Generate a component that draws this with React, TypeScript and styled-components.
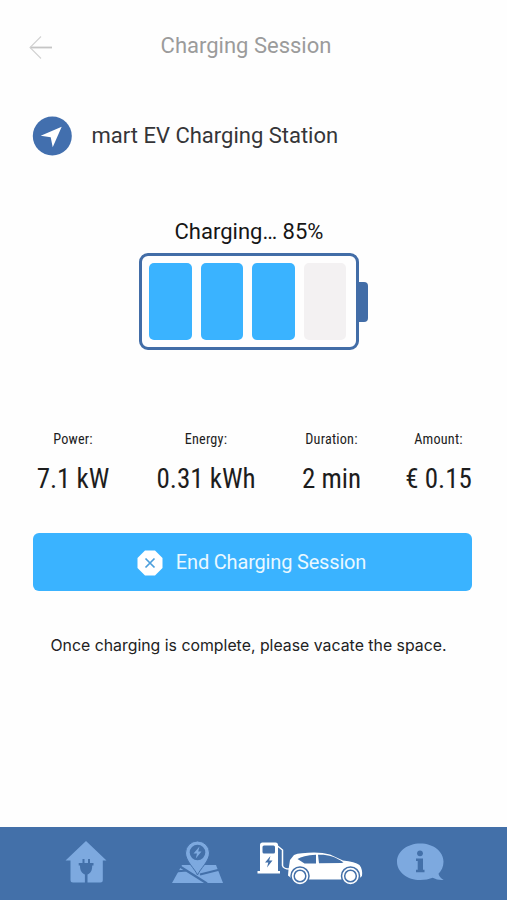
import React from 'react';
import styled, { createGlobalStyle } from 'styled-components';

const GlobalStyle = createGlobalStyle`
  * { box-sizing: border-box; }
  html, body { margin: 0; background: #fefefe; }
  body { font-family: Roboto, "Liberation Sans", sans-serif; }
  svg { display: block; flex: none; }
`;

const Screen = styled.div`
  width: 507px;
  height: 900px;
  display: flex;
  flex-direction: column;
  background: #fefefe;
  overflow: hidden;
`;

const Header = styled.header`
  height: 90px;
  display: grid;
  grid-template-columns: 109px 274px 1fr;
  align-items: center;
`;

const BackButton = styled.button`
  border: 0;
  background: none;
  padding: 4px 0 0 28px;
`;

const Title = styled.h1`
  margin: 0;
  padding-top: 2px;
  text-align: center;
  font-size: 22px;
  line-height: 28px;
  font-weight: 400;
  color: #9b9b9b;
`;

const Station = styled.div`
  height: 92px;
  display: flex;
  align-items: center;
  gap: 19.5px;
  padding-left: 32px;
`;

const StationName = styled.span`
  font-size: 22px;
  line-height: 28px;
  color: #353538;
`;

const Charge = styled.section`
  height: 239px;
  padding: 36px 0 0 139px;
`;

const ChargeLabel = styled.div`
  width: 220px;
  height: 35px;
  text-align: center;
  font-size: 22px;
  line-height: 28px;
  color: #161616;
`;

const Battery = styled.div`
  display: flex;
  align-items: center;
`;

const Shell = styled.div`
  width: 220px;
  height: 97px;
  padding: 7px;
  display: flex;
  gap: 9px;
  border: 3px solid #426da7;
  border-radius: 9px;
`;

const Cell = styled.div<{ $full: boolean }>`
  width: 42.5px;
  height: 77px;
  border-radius: 5px;
  background: ${(p) => (p.$full ? '#3ab3ff' : '#f3f1f2')};
`;

const Terminal = styled.div`
  width: 9px;
  height: 40px;
  border-radius: 0 4px 4px 0;
  background: #426da7;
`;

const Stats = styled.dl`
  margin: 0;
  height: 112px;
  padding: 8px 11px 0 7px;
  display: grid;
  grid-template-columns: 132px 134px 117px 97px;
`;

const Stat = styled.div`
  display: flex;
  flex-direction: column;
  align-items: center;
  white-space: nowrap;
  color: #1d1d1d;
  font-family: "Roboto Condensed", Roboto, sans-serif;
  font-stretch: 75%;
`;

const StatName = styled.dt`
  font-size: 14.2px;
  line-height: 20px;
  letter-spacing: 0.2px;
`;

const StatValue = styled.dd`
  margin: 14px 0 0;
  font-size: 27px;
  line-height: 32px;
`;

const EndButton = styled.button`
  margin-left: 33px;
  width: 439px;
  height: 58px;
  padding: 0 2px 0 0;
  display: flex;
  align-items: center;
  justify-content: center;
  gap: 13px;
  border: 0;
  border-radius: 6px;
  background: #3ab3ff;
  color: #e9f8ff;
  font: 400 20px/28px Roboto, sans-serif;
  letter-spacing: -0.18px;
`;

const EndIcon = styled.svg`
  margin-top: 1px;
`;

const Note = styled.p`
  margin: 43px 0 0;
  width: 497px;
  text-align: center;
  font: 400 15.85px/24px Inter, sans-serif;
  color: #222;
`;

const Nav = styled.nav`
  margin-top: auto;
  height: 73px;
  padding: 9px 0 0 59px;
  display: grid;
  grid-template-columns: 107px 88px 139px 1fr;
  background: #4370a9;
`;

const NavItem = styled.a<{ $active?: boolean }>`
  color: ${(p) => (p.$active ? '#fff' : '#7da9df')};
`;

const BG = '#4370a9';

const HouseIcon = () => (
  <svg width="54" height="54" viewBox="59 836 54 54" fill="currentColor">
    <path d="M86 841 106.5 860.5H102.8V880q0 2.5-2.5 2.5H73q-2.500 0-2.500-2.500V860.500H65.500Z" />
    <path fill={BG} d="M82.500 859h2v4h3.500v-4h2v4h3.500v2.500h-1.300c0 5.500-1.700 7.800-4.700 9v8.500h-2.600V874.500c-3-1.200-4.900-3.500-4.900-9h-1.300V863h3.800Z" />
  </svg>
);

const MapIcon = () => (
  <svg width="62" height="54" viewBox="166 836 62 54" fill="currentColor">
    <path d="M182 865h34l7 18H172Z" />
    <path d="M175 871.500 187 870.500 M180 866.500 207 883.500" fill="none" stroke={BG} strokeWidth="2.200" />
    <path d="M200 874.500 220 869.500" fill="none" stroke={BG} strokeWidth="2" />
    <path stroke={BG} strokeWidth="1" d="M197.500 875c-2.500-6-12-14-12-22a12 12 0 0 1 24 0c0 8-9.500 16-12 22Z" />
    <circle cx="197.500" cy="852.500" r="7.800" fill={BG} />
    <path d="m199.500 846.500-6 7h3.500l-1.200 5 5.700-7H198.200Z" />
  </svg>
);

const CarIcon = () => (
  <svg width="112" height="54" viewBox="254 836 112 54" fill="currentColor">
    <path d="M260 871V845q0-2.500 2.500-2.500h13q2.500 0 2.500 2.500V871h2v2.500H257.500V871Z" />
    <rect x="262.500" y="845.500" width="12.500" height="8" rx="1.500" fill={BG} />
    <path fill={BG} d="m270.500 856-5.500 6.500h3.300l-1.300 5 5.500-7h-3.300Z" />
    <path d="M277 845.500 282.500 850V865.500Q283 869 290 869" fill="none" stroke="currentColor" strokeWidth="1.500" />
    <path d="M288.500 869.500 290 860l4-5q3-1.500 8-1.800 17-2 28 1.300l13 6q12 1 16.500 4.500c2.500 3 3 7 2.500 11l-4 3.500H293l-5-4Z" />
    <path fill={BG} d="M297.500 859q5-3.500 18.500-4.200v8.700h-11.500ZM318 854.800c9-.5 17 1.500 25.500 7.700l-2 .5-22.500.2Z" />
    <g fill="currentColor" stroke={BG} strokeWidth="1.500">
      <circle cx="300" cy="876" r="9" /><circle cx="350.500" cy="876" r="9" />
      <circle cx="300" cy="876" r="5.800" /><circle cx="350.500" cy="876" r="5.800" />
    </g>
  </svg>
);

const InfoIcon = () => (
  <svg width="54" height="54" viewBox="393 836 54 54" fill="currentColor">
    <path d="M420.300 843.500c13 0 23.200 8 23.200 18.200 0 5-2 9-5 12q1 4 5.200 6.300-6 .6-11-2.300-5.500 2.300-12.400 2.300c-13 0-23.300-8-23.300-18.300s10.300-18.200 23.300-18.200Z" />
    <g fill={BG}>
      <circle cx="420" cy="853.300" r="2.900" />
      <path d="M416 858.500h7V869.700h1.500v2.500H416V869.700h1.700v-8.700h-1.700Z" />
    </g>
  </svg>
);

const stats = [
  ['Power:', '7.1 kW'],
  ['Energy:', '0.31 kWh'],
  ['Duration:', '2 min'],
  ['Amount:', '€ 0.15'],
];

export default function App() {
  return (
    <Screen>
      <GlobalStyle />
      <Header>
        <BackButton aria-label="Back">
          <svg width="26" height="24" viewBox="0 0 26 24" fill="none" stroke="#c5c5c5" strokeWidth="1.800">
            <path d="M24 12.500H2" />
            <path d="M13 1.500 2 12.500l11 11" stroke="#d2d2d2" strokeWidth="1.100" />
          </svg>
        </BackButton>
        <Title>Charging Session</Title>
      </Header>
      <Station>
        <svg width="40" height="40" viewBox="0 0 40 40">
          <circle cx="20.300" cy="20" r="19.500" fill="#426fae" />
          <path d="M29.700 10.700 20.700 31.300 18.700 21.300 8.700 19.700Z" fill="#fff" />
        </svg>
        <StationName>mart EV Charging Station</StationName>
      </Station>
      <Charge>
        <ChargeLabel>Charging… 85%</ChargeLabel>
        <Battery>
          <Shell>
            {[true, true, true, false].map((full, i) => <Cell key={i} $full={full} />)}
          </Shell>
          <Terminal />
        </Battery>
      </Charge>
      <Stats>
        {stats.map(([name, value]) => (
          <Stat key={name}>
            <StatName>{name}</StatName>
            <StatValue>{value}</StatValue>
          </Stat>
        ))}
      </Stats>
      <EndButton>
        <EndIcon width="26" height="26" viewBox="0 0 26 26">
          <path d="M8 .5h10L25.500 8v10L18 25.500H8L.5 18V8Z" fill="#fff" />
          <path d="m8.500 8.500 9 9m0-9-9 9" stroke="#4b9fdc" strokeWidth="1.700" />
        </EndIcon>
        End Charging Session
      </EndButton>
      <Note>Once charging is complete, please vacate the space.</Note>
      <Nav>
        <NavItem><HouseIcon /></NavItem>
        <NavItem><MapIcon /></NavItem>
        <NavItem $active><CarIcon /></NavItem>
        <NavItem><InfoIcon /></NavItem>
      </Nav>
    </Screen>
  );
}
